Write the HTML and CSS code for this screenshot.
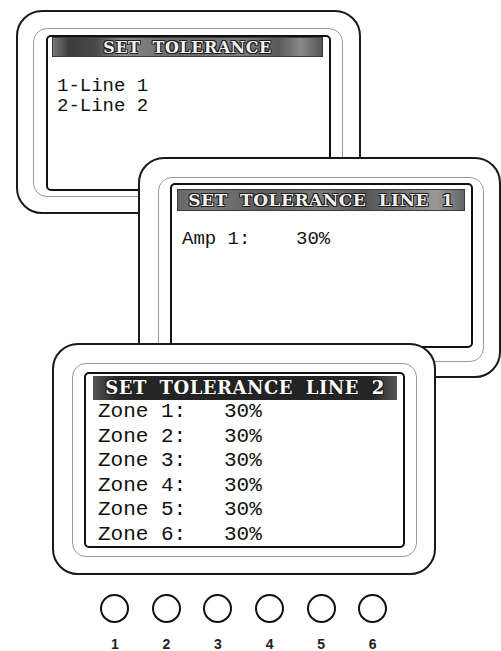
FILE: index.html
```html
<!DOCTYPE html>
<html lang="en">

<head>
    <meta charset="UTF-8">
    <meta name="viewport" content="width=device-width, initial-scale=1.0">
    <title>Set Tolerance Screens</title>
    <link rel="stylesheet" href="styles.css">
</head>

<body>

    <div class="stage">

        <!-- Main menu screen -->
        <div class="device device-menu">
            <div class="bezel">
                <div class="screen">
                    <div class="title">SET TOLERANCE</div>
                    <div class="lines">
                        <div class="line">1-Line 1</div>
                        <div class="line">2-Line 2</div>
                    </div>
                </div>
            </div>
        </div>

        <!-- Line 1 screen -->
        <div class="device device-line1">
            <div class="bezel">
                <div class="screen">
                    <div class="title">SET TOLERANCE LINE 1</div>
                    <div class="lines">
                        <div class="line">Amp 1:    30%</div>
                    </div>
                </div>
            </div>
        </div>

        <!-- Line 2 screen -->
        <div class="device device-line2">
            <div class="bezel">
                <div class="screen">
                    <div class="title">SET TOLERANCE LINE 2</div>
                    <div class="lines">
                        <div class="line">Zone 1:   30%</div>
                        <div class="line">Zone 2:   30%</div>
                        <div class="line">Zone 3:   30%</div>
                        <div class="line">Zone 4:   30%</div>
                        <div class="line">Zone 5:   30%</div>
                        <div class="line">Zone 6:   30%</div>
                    </div>
                </div>
            </div>
        </div>

    </div>

    <div class="keys">
        <div class="key"><span class="knob"></span><span class="num">1</span></div>
        <div class="key"><span class="knob"></span><span class="num">2</span></div>
        <div class="key"><span class="knob"></span><span class="num">3</span></div>
        <div class="key"><span class="knob"></span><span class="num">4</span></div>
        <div class="key"><span class="knob"></span><span class="num">5</span></div>
        <div class="key"><span class="knob"></span><span class="num">6</span></div>
    </div>

</body>

</html>
```

FILE: styles.css
```css
/* General Styles */
* {
    margin: 0;
    padding: 0;
    box-sizing: border-box;
}

body {
    background-color: #fff;
    font-family: "Liberation Mono", "Courier New", monospace;
    color: #111;
    overflow: hidden;
    height: 651px;
}

/* Canvas holding the overlapping screens */
.stage {
    position: relative;
    height: 594px;
}

/* Device frame */
.device {
    position: absolute;
    display: flex;
    background: #fff;
    border: 2px solid #1a1a1a;
    border-radius: 26px;
}

.bezel {
    flex: 1;
    display: flex;
    border: 1px solid #9a9a9a;
    border-radius: 14px;
}

.screen {
    flex: 1;
    border: 2px solid #111;
    border-radius: 5px;
    overflow: hidden;
}

/* Slab-serif caption bar */
.title {
    font-family: "DejaVu Serif", "Liberation Serif", serif;
    font-weight: bold;
    text-align: center;
    white-space: pre;
    color: #f2f2f2;
    letter-spacing: 0.5px;
    word-spacing: 6px;
    text-shadow: 0 0 1px #000, 1px 1px 0 #222, -1px -1px 0 #222, 1px -1px 0 #222, -1px 1px 0 #222;
}

.line {
    white-space: pre;
}

/* Menu screen */
.device-menu {
    left: 16px;
    top: 10px;
    width: 345px;
    height: 204px;
    padding: 16px 16px 15px 15px;
}

.device-menu .bezel {
    padding: 6px 11px 5px 12px;
}

.device-menu .screen {
    padding: 0 6px 0 4px;
}

.device-menu .title {
    height: 20px;
    line-height: 19px;
    font-size: 16px;
    border: 1px solid #3a3a3a;
    background: linear-gradient(90deg, #777 0%, #3c3c3c 6%, #4a4a4a 16%, #8a8a8a 26%, #6a6a6a 45%, #7c7c7c 70%, #5a5a5a 84%, #8a8a8a 92%, #555 100%);
}

.device-menu .lines {
    padding: 20px 0 0 5px;
    font-size: 19px;
    line-height: 19.5px;
}

/* Line 1 screen */
.device-line1 {
    left: 138px;
    top: 157px;
    width: 363px;
    height: 221px;
    padding: 18px 15px 14px 18px;
}

.device-line1 .bezel {
    padding: 5px 10px 13px 11px;
}

.device-line1 .screen {
    padding: 4px 6px 0 5px;
}

.device-line1 .title {
    height: 22px;
    line-height: 21px;
    font-size: 17px;
    border: 1px solid #3a3a3a;
    background: linear-gradient(90deg, #666 0%, #7a7a7a 10%, #5c5c5c 30%, #7a7a7a 50%, #555 65%, #7a7a7a 80%, #999 90%, #666 100%);
}

.device-line1 .lines {
    padding: 18px 0 0 5px;
    font-size: 19px;
    line-height: 20px;
}

/* Line 2 screen */
.device-line2 {
    left: 52px;
    top: 343px;
    width: 384px;
    height: 232px;
    padding: 18px 17px 16px 18px;
}

.device-line2 .bezel {
    padding: 8px 11px 8px 11px;
}

.device-line2 .screen {
    padding: 2px 6px 0 7px;
}

.device-line2 .title {
    height: 24px;
    line-height: 24px;
    font-size: 18px;
    color: #fff;
    background: linear-gradient(90deg, #555 0%, #262626 8%, #222 50%, #262626 92%, #555 100%);
}

.device-line2 .lines {
    padding-left: 5px;
    font-size: 21px;
    line-height: 24.6px;
}

/* Keypad */
.keys {
    display: grid;
    grid-template-columns: repeat(6, 51.6px);
    margin-left: 89px;
}

.key {
    display: flex;
    flex-direction: column;
    align-items: center;
}

.knob {
    width: 29px;
    height: 29px;
    border: 2px solid #111;
    border-radius: 50%;
}

.num {
    margin-top: 15px;
    font-family: "Liberation Sans", Arial, sans-serif;
    font-weight: bold;
    font-size: 14px;
    line-height: 13px;
    color: #222;
}
```
